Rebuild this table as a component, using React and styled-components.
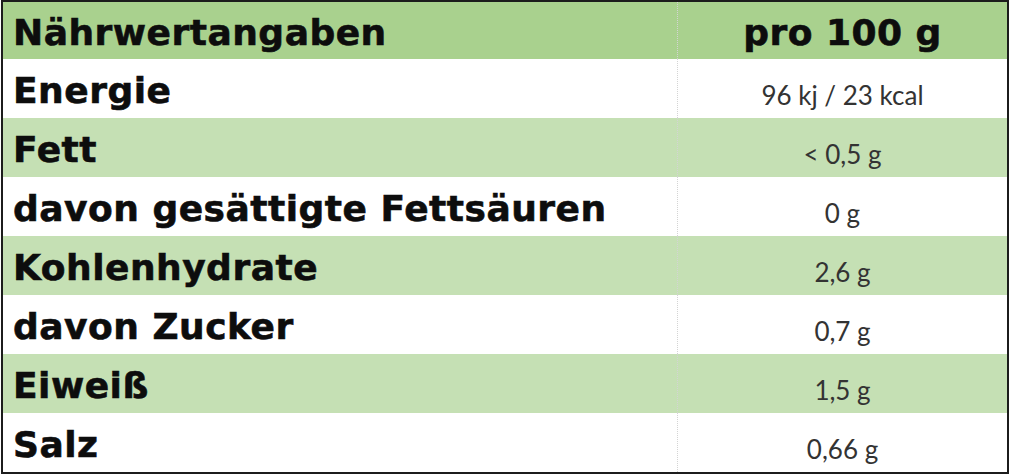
import React from "react";
import styled, { createGlobalStyle } from "styled-components";

const rows = [
  ["Energie", "96 kj / 23 kcal"],
  ["Fett", "< 0,5 g"],
  ["davon gesättigte Fettsäuren", "0 g"],
  ["Kohlenhydrate", "2,6 g"],
  ["davon Zucker", "0,7 g"],
  ["Eiweiß", "1,5 g"],
  ["Salz", "0,66 g"],
];

const App = () => {
  return (
    <>
      <GlobalStyle />
      <Table>
        <Row $tone="head">
          <Label>Nährwertangaben</Label>
          <HeadValue>pro 100 g</HeadValue>
        </Row>
        {rows.map(([label, value], i) => (
          <Row key={label} $tone={i % 2 === 1 ? "green" : "white"}>
            <Label>{label}</Label>
            <Value>{value}</Value>
          </Row>
        ))}
      </Table>
    </>
  );
};

const GlobalStyle = createGlobalStyle`
  body {
    margin: 0;
    background: #fff;
    font-family: "Lato", "Liberation Sans", sans-serif;
  }
`;

const tones = {
  head: "#a9d18e",
  green: "#c5e0b4",
  white: "#ffffff",
};

const Table = styled.div`
  width: 1004px;
  margin: 0 0 0 1px;
  border: 2px solid #1c1c1c;
  display: flex;
  flex-direction: column;
`;

const Row = styled.div`
  display: grid;
  grid-template-columns: 675px 1fr;
  height: ${(p) => (p.$tone === "head" ? "57px" : "59px")};
  background: ${(p) => tones[p.$tone]};
`;

const Label = styled.div`
  display: flex;
  align-items: center;
  padding: 3px 0 0 10px;
  border-right: 1px dotted #d4d4d4;
  font-family: "DejaVu Sans", "Lato", sans-serif;
  font-size: 36px;
  font-weight: 700;
  letter-spacing: 0.5px;
  -webkit-text-stroke: 0.6px #0d0d0d;
  color: #0d0d0d;
  white-space: nowrap;
`;

const Value = styled.div`
  display: flex;
  align-items: center;
  justify-content: center;
  padding-top: 13px;
  font-size: 26px;
  font-weight: 400;
  color: #333;
`;

const HeadValue = styled(Value)`
  padding-top: 3px;
  font-family: "DejaVu Sans", "Lato", sans-serif;
  font-size: 36px;
  font-weight: 700;
  letter-spacing: 0.5px;
  -webkit-text-stroke: 0.6px #0d0d0d;
  color: #0d0d0d;
`;

export default App;
